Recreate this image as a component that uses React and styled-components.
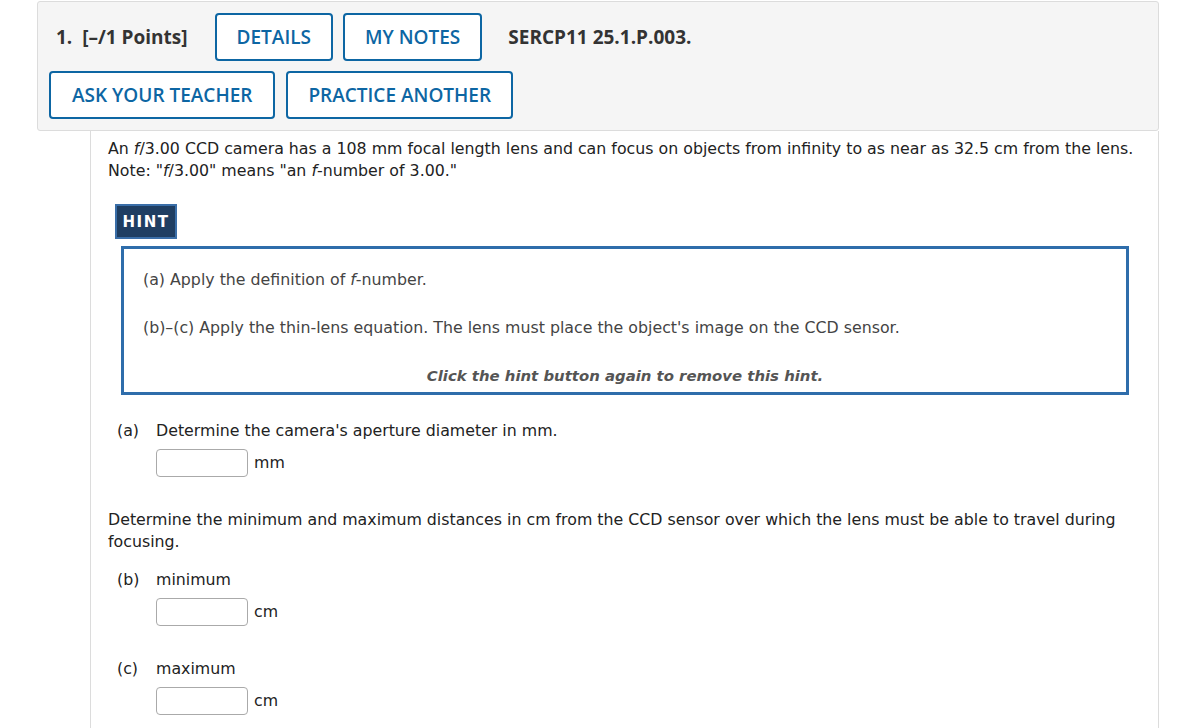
import React from 'react'
import styled, { createGlobalStyle } from 'styled-components'

const GlobalStyle = createGlobalStyle`
  body {
    margin: 0;
    background: #fff;
    font-family: "DejaVu Sans", Verdana, sans-serif;
  }
`

const Page = styled.div`
  width: 1122px;
  padding: 1px 0 0 37px;
`

const Header = styled.div`
  background: #f5f5f5;
  border: 1px solid #dcdcdc;
  border-radius: 3px;
  padding: 11px;
  display: flex;
  flex-direction: column;
  gap: 10px;
`

const HeaderRow = styled.div`
  display: flex;
  align-items: center;
  gap: ${props => props.gap || 0}px;
`

const Label = styled.span`
  font-family: "Open Sans", sans-serif;
  font-weight: 700;
  font-size: 19px;
  color: #333;
  margin: ${props => props.margin || '0'};
  white-space: nowrap;
`

const OutlineButton = styled.button`
  height: 48px;
  padding: 0 ${props => props.pad || 20}px;
  background: #fff;
  border: 2px solid #0d66a3;
  border-radius: 4px;
  color: #0d66a3;
  font-family: "Open Sans", sans-serif;
  font-weight: 600;
  font-size: 19px;
  white-space: nowrap;
  margin-right: ${props => props.after || 0}px;
`

const Content = styled.div`
  margin-left: 53px;
  border-left: 1px solid #dcdcdc;
  border-right: 1px solid #dcdcdc;
  padding: 7px 18px 20px 17px;
  font-size: 15.8px;
  line-height: 22px;
  color: #222;
`

const Para = styled.p`
  margin: ${props => props.margin || '0'};
`

const HintButton = styled.button`
  display: block;
  margin: 22px 0 0 7px;
  width: 62px;
  height: 35px;
  background: #1f3e62;
  border: 2px solid #3a6ea8;
  color: #fff;
  font-family: "DejaVu Sans", Verdana, sans-serif;
  font-weight: 700;
  font-size: 15px;
  letter-spacing: 1.5px;
  padding: 0;
`

const HintBox = styled.div`
  margin: 7px 11px 0 13px;
  border: 3px solid #2f6dab;
  padding: 20px 19px 5px;
  color: #444;
`

const HintLine = styled.p`
  margin: 0 0 26px;
`

const HintNote = styled.p`
  margin: 0;
  text-align: center;
  font-size: 14.9px;
  font-weight: 700;
  font-style: italic;
  color: #555;
`

const Part = styled.div`
  margin: ${props => props.top}px 0 0 9px;
  display: grid;
  grid-template-columns: 39px auto;
  row-gap: 7px;
`

const AnswerRow = styled.div`
  grid-column: 2;
  display: flex;
  align-items: center;
  gap: 6px;
`

const AnswerInput = styled.input`
  box-sizing: border-box;
  width: 92px;
  height: 28px;
  border: 1px solid #aaa;
  border-radius: 4px;
  background: #fff;
`

export default function App() {
  return (
    <Page>
      <GlobalStyle />
      <Header>
        <HeaderRow>
          <Label margin="0 27px 0 7px">1.&nbsp;&nbsp;[–/1 Points]</Label>
          <OutlineButton after={10}>DETAILS</OutlineButton>
          <OutlineButton after={26}>MY NOTES</OutlineButton>
          <Label>SERCP11 25.1.P.003.</Label>
        </HeaderRow>
        <HeaderRow gap={11}>
          <OutlineButton pad={21}>ASK YOUR TEACHER</OutlineButton>
          <OutlineButton>PRACTICE ANOTHER</OutlineButton>
        </HeaderRow>
      </Header>
      <Content>
        <Para>
          An <i>f</i>/3.00 CCD camera has a 108 mm focal length lens and can focus on objects from
          infinity to as near as 32.5 cm from the lens.
          <br />
          Note: "<i>f</i>/3.00" means "an <i>f</i>-number of 3.00."
        </Para>
        <HintButton>HINT</HintButton>
        <HintBox>
          <HintLine>(a) Apply the definition of <i>f</i>-number.</HintLine>
          <HintLine>
            (b)–(c) Apply the thin-lens equation. The lens must place the object's image on the CCD
            sensor.
          </HintLine>
          <HintNote>Click the hint button again to remove this hint.</HintNote>
        </HintBox>
        <Part top={25}>
          <span>(a)</span>
          <span>Determine the camera's aperture diameter in mm.</span>
          <AnswerRow>
            <AnswerInput />
            <span>mm</span>
          </AnswerRow>
        </Part>
        <Para margin="32px 0 0">
          Determine the minimum and maximum distances in cm from the CCD sensor over which the lens
          must be able to travel during focusing.
        </Para>
        <Part top={16}>
          <span>(b)</span>
          <span>minimum</span>
          <AnswerRow>
            <AnswerInput />
            <span>cm</span>
          </AnswerRow>
        </Part>
        <Part top={32}>
          <span>(c)</span>
          <span>maximum</span>
          <AnswerRow>
            <AnswerInput />
            <span>cm</span>
          </AnswerRow>
        </Part>
      </Content>
    </Page>
  )
}
